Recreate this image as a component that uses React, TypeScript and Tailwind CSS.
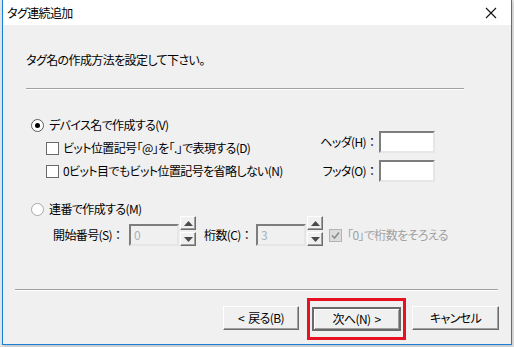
import React from "react";

const font = "font-['Meiryo_UI','Noto_Sans_CJK_JP',sans-serif] [font-feature-settings:'palt'] tracking-[-0.6px]";

function Colon() {
  return <span className="[font-feature-settings:normal] tracking-normal">：</span>;
}

function Radio({ checked }: { checked?: boolean }) {
  return (
    <span
      className={`flex h-[13px] w-[13px] items-center justify-center rounded-full border bg-white ${
        checked ? "border-[#5a5a5a]" : "border-[#a8a8a8]"
      }`}
    >
      {checked && <span className="h-[5px] w-[5px] rounded-full bg-black" />}
    </span>
  );
}

function Check() {
  return <span className="block h-[13px] w-[13px] border border-[#6a6a6a] bg-white" />;
}

function DisabledCheck() {
  return (
    <span className="flex h-[13px] w-[13px] items-center justify-center border border-[#b4b4b4] bg-[#dcdcdc]">
      <svg width="11" height="11" viewBox="0 0 11 11">
        <path d="M2 5.5 L4.5 8 L9 2.5" fill="none" stroke="#8c8c8c" strokeWidth="1.6" />
      </svg>
    </span>
  );
}

function TextBox({ w, value, disabled }: { w: string; value?: string; disabled?: boolean }) {
  return (
    <div
      className={`${w} flex h-[22px] items-center border-2 border-t-[#7d7d7d] border-l-[#7d7d7d] border-b-[#e6e6e6] border-r-[#e6e6e6] pl-[3px] text-[12px] ${
        disabled ? "bg-[#f0f0f0] text-[#a6b0c2]" : "bg-white"
      }`}
    >
      {value}
    </div>
  );
}

function SpinBtn({ up }: { up?: boolean }) {
  return (
    <div className="flex h-[14px] w-[16px] items-center justify-center border border-t-white border-l-white border-b-[#6d6d6d] border-r-[#6d6d6d] bg-[#f0f0f0] shadow-[inset_-1px_-1px_0_#a0a0a0]">
      <svg width="9" height="5" viewBox="0 0 9 5">
        {up ? <path d="M0 5 L4.5 0 L9 5 Z" fill="#4a4a4a" /> : <path d="M0 0 L9 0 L4.5 5 Z" fill="#4a4a4a" />}
      </svg>
    </div>
  );
}

function Spinner() {
  return (
    <div className="flex h-[30px] w-[16px] flex-col justify-between">
      <SpinBtn up />
      <SpinBtn />
    </div>
  );
}

function Separator({ className }: { className: string }) {
  return <div className={`${className} h-[2px] border-t border-t-[#a0a0a0] border-b border-b-white`} />;
}

export default function App() {
  return (
    <div className={`${font} h-[347px] w-[514px] overflow-hidden bg-[#e6e6e6] text-[12px] leading-[16px] text-black`}>
      <div className="ml-[2px] flex h-[345px] w-[510px] flex-col border-x border-b border-[#1a7fd6] bg-[#f0f0f0] shadow-[1px_2px_3px_rgba(0,0,0,0.15)]">
        {/* Title bar */}
        <div className="flex h-[25px] items-center justify-between bg-white pl-[4px] pr-[14px] text-[12px]">
          <span>タグ連続追加</span>
          <svg width="12" height="12" viewBox="0 0 12 12">
            <path d="M1 1 L11 11 M11 1 L1 11" stroke="#111" strokeWidth="1.1" />
          </svg>
        </div>

        {/* Intro */}
        <div className="mt-[27px] pl-[23px]">タグ名の作成方法を設定して下さい。</div>
        <Separator className="ml-[23px] mt-[20px] w-[438px]" />

        {/* Device section */}
        <div className="mt-[27px] flex">
          <div className="flex w-[300px] flex-col gap-[7px] pl-[28px]">
            <div className="flex h-[16px] items-center gap-[5px]">
              <Radio checked />
              <span>デバイス名で作成する(V)</span>
            </div>
            <div className="flex h-[16px] items-center gap-[4px] pl-[15px]">
              <Check />
              <span>ビット位置記号「@」を「.」で表現する(D)</span>
            </div>
            <div className="flex h-[16px] items-center gap-[4px] pl-[15px]">
              <Check />
              <span>0ビット目でもビット位置記号を省略しない(N)</span>
            </div>
          </div>
          <div className="ml-[10px] mt-[14px] flex w-[122px] flex-col gap-[7px]">
            <div className="flex items-center justify-end">
              <span className="mr-[1px]">ヘッダ(H)<Colon /></span>
              <TextBox w="w-[56px]" />
            </div>
            <div className="flex items-center justify-end">
              <span className="mr-[1px]">フッタ(O)<Colon /></span>
              <TextBox w="w-[56px]" />
            </div>
          </div>
        </div>

        {/* Sequential */}
        <div className="mt-[20px] flex h-[14px] items-center gap-[5px] pl-[28px]">
          <Radio />
          <span>連番で作成する(M)</span>
        </div>
        <div className="flex h-[30px] items-end pl-[50px]">
          <span className="flex h-[22px] w-[76px] items-center">開始番号(S)<Colon /></span>
          <TextBox w="w-[50px]" value="0" disabled />
          <div className="ml-[1px]">
            <Spinner />
          </div>
          <span className="ml-[8px] flex h-[22px] w-[52px] items-center">桁数(C)<Colon /></span>
          <TextBox w="w-[50px]" value="3" disabled />
          <div className="ml-[1px]">
            <Spinner />
          </div>
          <div className="ml-[6px] flex h-[22px] items-center gap-[5px] text-[#a0a0a0]">
            <DisabledCheck />
            <span>「0」で桁数をそろえる</span>
          </div>
        </div>

        <Separator className="ml-[12px] mt-[43px] w-[483px]" />

        {/* Buttons */}
        <div className="mt-[15px] flex pl-[220px]">
          <button className="flex h-[24px] w-[76px] items-center justify-center gap-[4px] border border-t-white border-l-white border-b-[#6d6d6d] border-r-[#6d6d6d] bg-[#f0f0f0] shadow-[inset_-1px_-1px_0_#a0a0a0]">
            <span>&lt;</span>
            <span>戻る(B)</span>
          </button>
          <div className="ml-[8px] -mt-[8px] flex h-[42px] w-[99px] items-center justify-center border-[3px] border-[#e81123]">
            <button className="flex h-[24px] w-[89px] items-center justify-center gap-[4px] border-2 border-[#6a6a6a] bg-[#f0f0f0] shadow-[inset_1px_1px_0_#fff,inset_-1px_-1px_0_#a0a0a0]">
              <span>次へ(N)</span>
              <span>&gt;</span>
            </button>
          </div>
          <button className="ml-[6px] flex h-[24px] w-[87px] items-center justify-center border border-t-white border-l-white border-b-[#6d6d6d] border-r-[#6d6d6d] bg-[#f0f0f0] shadow-[inset_-1px_-1px_0_#a0a0a0]">
            キャンセル
          </button>
        </div>
      </div>
    </div>
  );
}
